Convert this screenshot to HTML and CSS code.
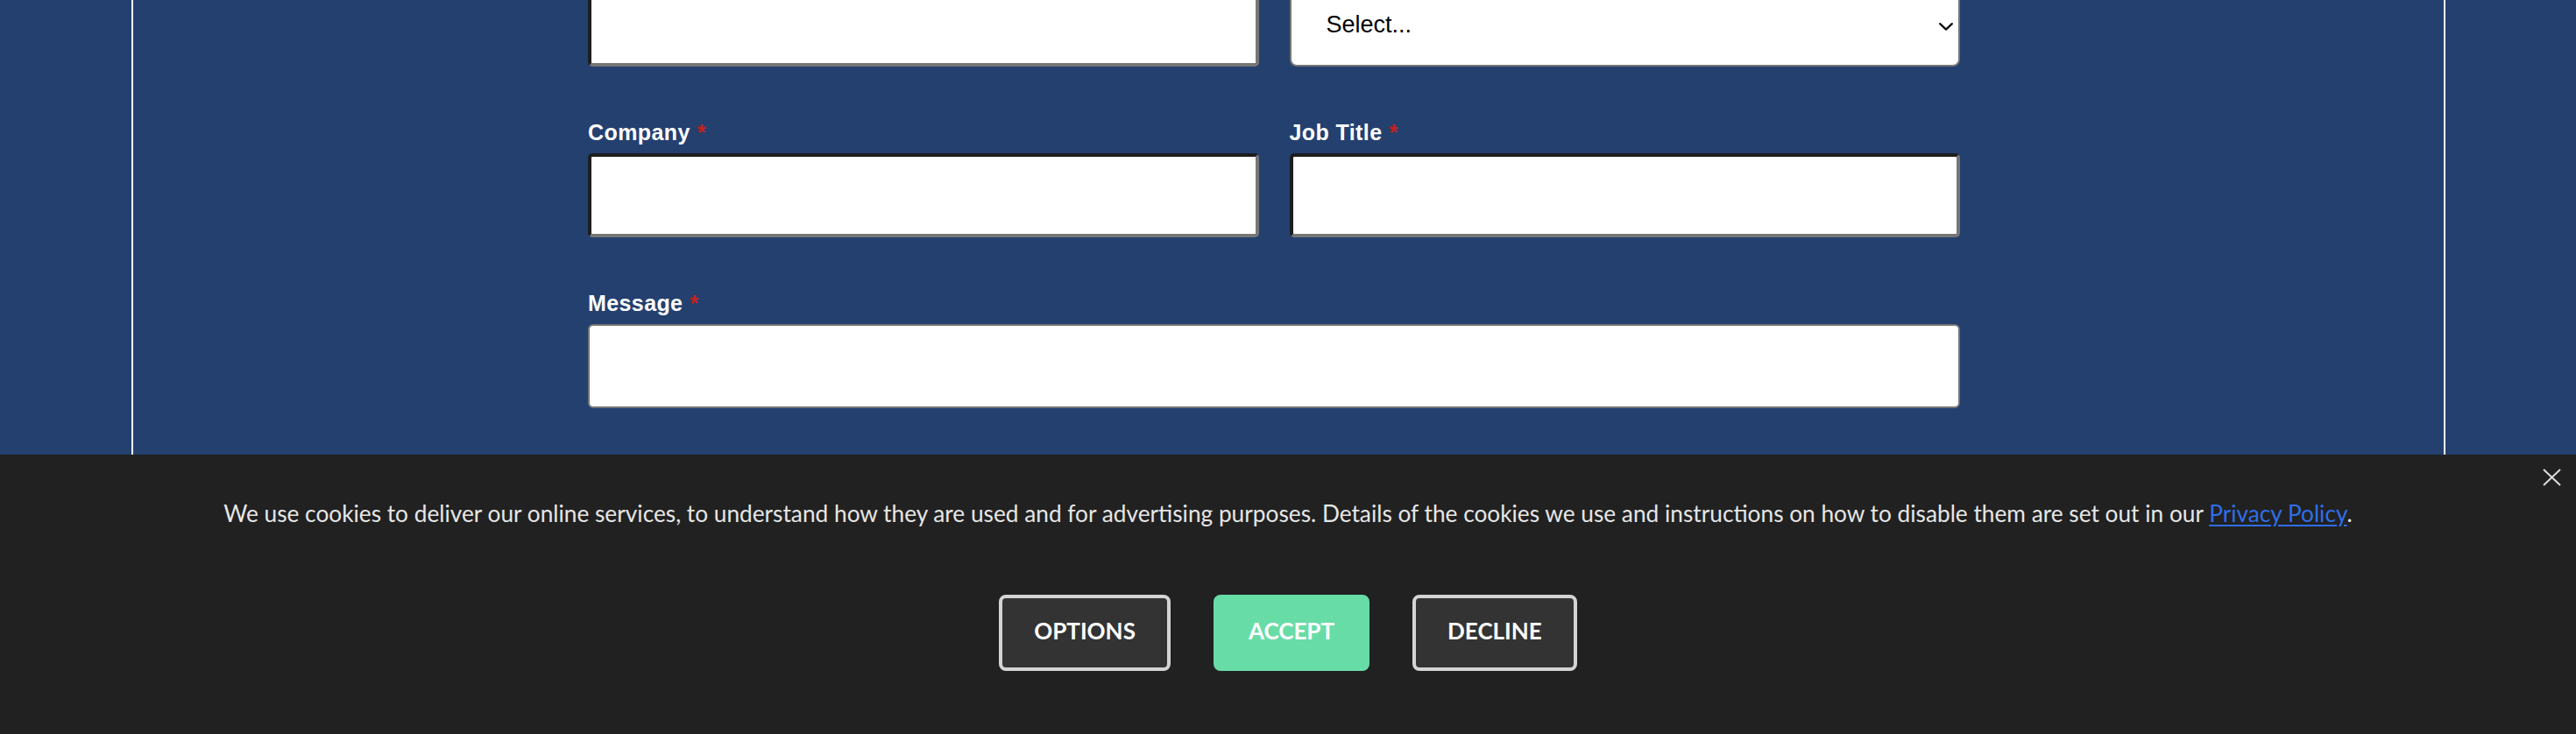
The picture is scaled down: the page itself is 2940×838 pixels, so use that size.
FILE: index.html
```html
<!DOCTYPE html>
<html lang="en">
<head>
<meta charset="utf-8">
<title>Contact form</title>
<link rel="stylesheet" href="styles.css">
</head>
<body>
<div class="page">
  <form class="form">
    <div class="field">
      <input class="input inset" type="text" aria-label="Field">
    </div>
    <div class="field">
      <div class="select-wrap">
        <select class="select" aria-label="Select">
          <option>Select...</option>
        </select>
        <svg class="chevron" width="16" height="9" viewBox="0 0 16 9" aria-hidden="true"><polyline points="1.2,1.2 8,7.6 14.8,1.2" fill="none" stroke="#111" stroke-width="2.4" stroke-linecap="round" stroke-linejoin="round"/></svg>
      </div>
    </div>
    <div class="field">
      <label class="label">Company<span class="req">*</span></label>
      <input class="input inset" type="text">
    </div>
    <div class="field">
      <label class="label">Job Title<span class="req">*</span></label>
      <input class="input inset" type="text">
    </div>
    <div class="field wide">
      <label class="label">Message<span class="req">*</span></label>
      <textarea class="input textarea"></textarea>
    </div>
  </form>
</div>

<div class="cookie">
  <button class="close" type="button" aria-label="Close">
    <svg width="21" height="20" viewBox="0 0 21 20" aria-hidden="true"><path d="M1 1 L20 19 M20 1 L1 19" stroke="#dcdcdc" stroke-width="2" fill="none"/></svg>
  </button>
  <p class="cookie-text">We use cookies to deliver our online services, to understand how they are used and for advertising purposes. Details of the cookies we use and instructions on how to disable them are set out in our <a href="#" class="link">Privacy Policy</a>.</p>
  <div class="actions">
    <button class="btn btn-dark" type="button">OPTIONS</button>
    <button class="btn btn-accept" type="button">ACCEPT</button>
    <button class="btn btn-dark" type="button">DECLINE</button>
  </div>
</div>
</body>
</html>
```

FILE: styles.css
```css
html, body {
  margin: 0;
  padding: 0;
}
body {
  background: #24406f;
  height: 838px;
  overflow: hidden;
  font-family: "Liberation Sans", Arial, sans-serif;
}
.page {
  margin: 0 149px 0 150px;
  min-height: 838px;
  border-left: 2px solid #ffffff;
  border-right: 2px solid #ffffff;
  padding: 0 552px 0 519px;
}
.form {
  display: grid;
  grid-template-columns: 1fr 1fr;
  column-gap: 35px;
  row-gap: 60px;
  margin-top: -20px;
}
.field {
  display: flex;
  flex-direction: column;
}
.wide {
  grid-column: 1 / 3;
}
.label {
  color: #ffffff;
  font-weight: bold;
  font-size: 25px;
  letter-spacing: 0.4px;
  line-height: 30px;
  margin-bottom: 9px;
}
.req {
  color: #c4201c;
  margin-left: 8px;
}
.input {
  box-sizing: border-box;
  width: 100%;
  height: 96px;
  margin: 0;
  background: #ffffff;
  font-family: "Liberation Sans", Arial, sans-serif;
  font-size: 27px;
  display: block;
}
.inset {
  border-style: solid;
  border-width: 4px;
  border-color: #1e1e1e #767676 #767676 #1e1e1e;
  border-radius: 5px;
}
.textarea {
  border: 2px solid #767676;
  border-radius: 6px;
  resize: none;
}
.select-wrap {
  position: relative;
}
.select {
  box-sizing: border-box;
  width: 100%;
  height: 96px;
  margin: 0;
  display: block;
  -webkit-appearance: none;
  appearance: none;
  background: #ffffff;
  border: 2px solid #767676;
  border-radius: 8px;
  padding: 0 0 0 40px;
  font-family: "Liberation Sans", Arial, sans-serif;
  font-size: 27px;
  color: #000000;
}
.chevron {
  position: absolute;
  right: 8px;
  top: 46px;
}
.cookie {
  position: fixed;
  left: 0;
  right: 0;
  bottom: 0;
  height: 319px;
  box-sizing: border-box;
  background: #212121;
  padding-top: 47px;
  font-family: Lato, "Open Sans", sans-serif;
}
.close {
  position: absolute;
  top: 16px;
  right: 17px;
  width: 21px;
  height: 20px;
  padding: 0;
  border: 0;
  background: transparent;
  display: flex;
}
.cookie-text {
  margin: 0;
  text-align: center;
  color: #e6e6e6;
  font-size: 26.25px;
  line-height: 40px;
}
.link {
  color: #2f6ee8;
  text-decoration: underline;
  text-underline-offset: 3px;
}
.actions {
  display: flex;
  justify-content: center;
  gap: 49px;
  margin-top: 73px;
}
.btn {
  box-sizing: border-box;
  height: 87px;
  padding: 22px 36px 26px;
  border-radius: 8px;
  font-family: Lato, "Open Sans", sans-serif;
  font-weight: bold;
  font-size: 26px;
  line-height: 31px;
  color: #ffffff;
}
.btn-dark {
  background: #333333;
  border: 4px solid #d4d4d4;
}
.btn-accept {
  background: #68dca7;
  border: 4px solid #68dca7;
}
```
